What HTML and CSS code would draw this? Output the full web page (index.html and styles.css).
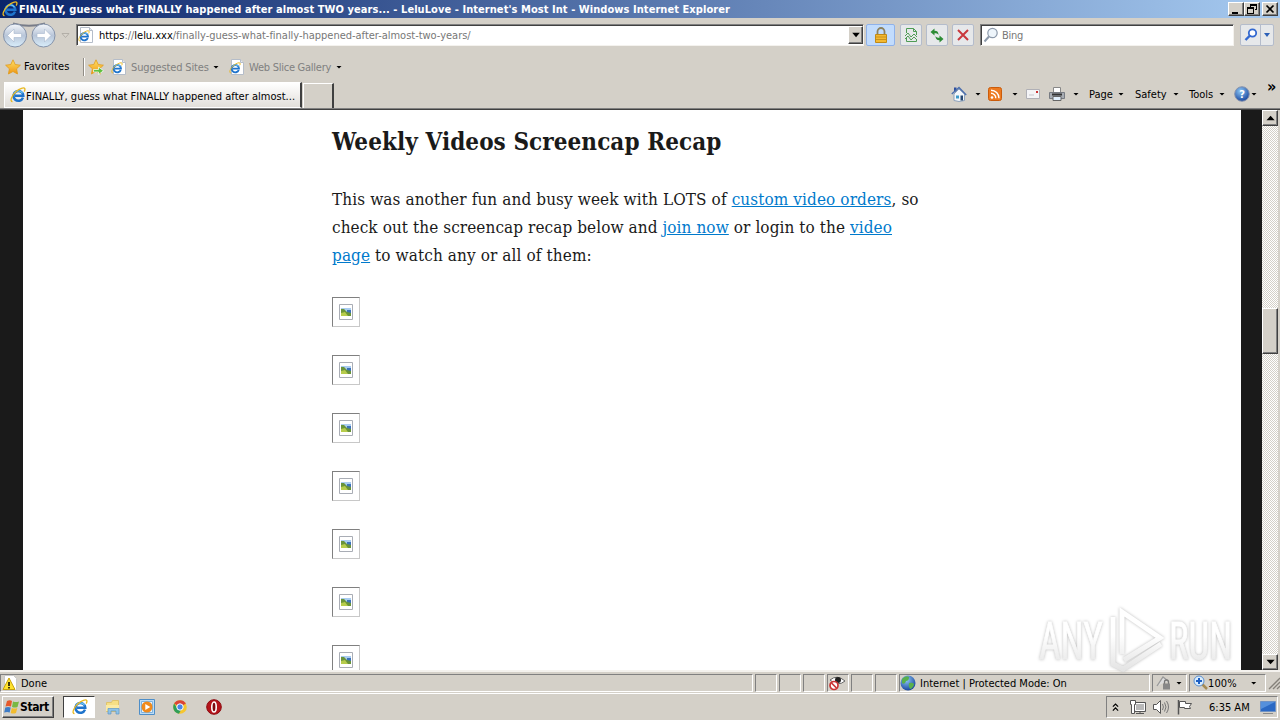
FILE: index.html
```
<!DOCTYPE html>
<html lang="en">
  <head>
    <meta charset="UTF-8" />
    <title>FINALLY, guess what FINALLY happened after almost TWO years...</title>
    <link rel="stylesheet" href="styles.css">
  </head>
  <body>
    <!-- Shared icons -->
    <svg class="defs" width="0" height="0">
      <defs>
        <linearGradient id="gold" x1="0" y1="0" x2="0" y2="1">
          <stop offset="0" stop-color="#ffe268" />
          <stop offset="1" stop-color="#ee9412" />
        </linearGradient>
        <linearGradient id="orb" x1="0" y1="0" x2="0" y2="1">
          <stop offset="0" stop-color="#f4f7fb" />
          <stop offset="0.5" stop-color="#b9c6d9" />
          <stop offset="1" stop-color="#d9eefb" />
        </linearGradient>
        <linearGradient id="silver" gradientUnits="userSpaceOnUse" x1="0" y1="8" x2="0" y2="66">
          <stop offset="0.4" stop-color="#fff" />
          <stop offset="1" stop-color="#e4e4e4" />
        </linearGradient>
        <radialGradient id="blueball" cx="0.4" cy="0.3" r="0.7">
          <stop offset="0" stop-color="#8fc8f5" />
          <stop offset="1" stop-color="#1a48a0" />
        </radialGradient>
        <symbol id="ie" viewBox="0 0 16 16">
          <path d="M13 10.600A4.900 4.900 0 1 1 13.300 8.800H5" fill="none" stroke="#1f74cc" stroke-width="2.500" />
          <path d="M12.600 6.200A4.900 4.900 0 0 0 4.200 6.400" fill="none" stroke="#6ccaf8" stroke-width="1.200" />
          <path d="M2.500 14.700C-.6 14.300 1.700 8.500 6.200 4.600 9.600 1.600 14 .1 14.800 1.600c.4.800 0 1.900-.6 3" fill="none" stroke="#e8b923" stroke-width="1.300" />
        </symbol>
        <symbol id="iepage" viewBox="0 0 16 16">
          <path d="M2.500.5h9l3 3v12h-12z" fill="#fff" stroke="#b5bdc9" />
          <path d="M11.500.5v3h3" fill="#e3e8ee" stroke="#b5bdc9" />
          <use href="#ie" x="0" y="3" width="12" height="12" />
        </symbol>
        <symbol id="star" viewBox="0 0 16 16">
          <path d="M8 .8l2.200 4.700 5.200.7-3.800 3.600.9 5.200L8 12.500 3.400 15l1-5.200L.6 6.200l5.200-.7z" fill="url(#gold)" stroke="#e09a1c" stroke-width=".8" />
        </symbol>
      </defs>
    </svg>

    <!-- Title bar -->
    <div class="titlebar">
      <svg class="icon" viewBox="0 0 16 16"><use href="#ie" /></svg>
      <span class="title">FINALLY, guess what FINALLY happened after almost TWO years... - LeluLove - Internet's Most Int - Windows Internet Explorer</span>
      <div class="window-buttons">
        <svg class="raised" viewBox="0 0 14 12"><path d="M3 9h6v2H3z" /></svg>
        <svg class="raised" viewBox="0 0 14 12"><path d="M5 1h7v6h-2v-1h1V3H6v1H5zM2 4h7v7H2zm1 2v4h5V6z" fill-rule="evenodd" /></svg>
        <svg class="raised close" viewBox="0 0 14 12"><path d="M3.500 2.500l7 7m0-7l-7 7" stroke="#000" stroke-width="1.700" /></svg>
      </div>
    </div>

    <!-- Address bar -->
    <div class="navbar">
      <svg class="arrows" viewBox="0 0 72 32">
        <path d="M13 4.500Q29 9 45 4.500" stroke="#777c88" stroke-width="2" fill="none" />
        <circle cx="15" cy="16.500" r="11.500" fill="url(#orb)" stroke="#8492a9" />
        <circle cx="43.500" cy="16.500" r="11.500" fill="url(#orb)" stroke="#8492a9" />
        <path d="M7.500 16.500l6.500-6.500v4.500h7.500v4h-7.500V23zM51 16.500L44.500 10v4.500H37v4h7.500V23z" fill="#fff" stroke="#a8b8ce" stroke-width=".6" />
        <path d="M62 14.500h7l-3.500 4z" fill="#d8d4cc" stroke="#aaa69f" stroke-width=".8" />
      </svg>
      <div class="field address">
        <svg class="icon" viewBox="0 0 16 16"><use href="#iepage" /></svg>
        <span class="url"><b>https</b>://<b>lelu.xxx</b>/finally-guess-what-finally-happened-after-almost-two-years/</span>
        <svg class="raised drop" viewBox="0 0 12 14"><path d="M3 5h7l-3.500 4z" /></svg>
      </div>
      <div class="tool lock">
        <svg class="icon" viewBox="0 0 16 16"><path d="M4.500 8V4.500a3.500 3.500 0 0 1 7 0V8" fill="none" stroke="#8c8260" stroke-width="1.800" /><path d="M2.500 7.500h11v8h-11z" fill="#f3b932" stroke="#c08a18" /><path d="M3 10h10M3 12.500h10" stroke="#c9921c" /></svg>
      </div>
      <div class="tool">
        <svg class="icon" viewBox="0 0 16 16"><path d="M3.500 6V1.500h7l3 3V8M3.500 11v3.500h10V12M10.500 1.500v3h3M2 9l3-3 3 4 3-3 3 3M2 12l3-3 3 4 3-3 3 3" fill="none" stroke="#4f9c55" /></svg>
      </div>
      <div class="tool">
        <svg class="icon" viewBox="0 0 16 16"><path d="M4.500 1L1 5h2.300c0 3 1.500 4 4.200 4C6 8 5.800 7 5.800 5H8zM11.500 14L15 10h-2.300c0-3-1.500-4-4.200-4 1.500 1 1.700 2 1.700 4H8z" transform="matrix(0 1 1 0 .5 .5)" fill="#2d8c35" /></svg>
      </div>
      <div class="tool">
        <svg class="icon" viewBox="0 0 16 16"><path d="M3 3l10 10M13 3L3 13" stroke="#c9383d" stroke-width="2" /></svg>
      </div>
      <div class="field search">
        <svg class="icon" viewBox="0 0 16 16"><circle cx="9.500" cy="6" r="4.700" fill="#eef5fb" stroke="#8d9aab" stroke-width="1.200" /><path d="M6 9.500L1.500 14.500" stroke="#8d9aab" stroke-width="2" /></svg>
        <span>Bing</span>
      </div>
      <div class="tool search-go">
        <svg class="icon" viewBox="0 0 16 16"><circle cx="9.500" cy="6" r="3.700" fill="#fff" stroke="#3268d0" stroke-width="1.800" /><path d="M7 8.500L2.500 13" stroke="#3268d0" stroke-width="2.400" /></svg>
        <svg class="split" viewBox="0 0 12 20"><path d="M3 8h6l-3 4z" fill="#2c60b8" /></svg>
      </div>
    </div>

    <!-- Favorites bar -->
    <div class="favbar">
      <svg class="icon" viewBox="0 0 16 16"><use href="#star" /></svg>
      <span class="fav-label">Favorites</span>
      <i class="sep"></i>
      <svg class="icon" viewBox="0 0 16 16"><use href="#star" /><path d="M5.500 10.500h5V8l5 3.800-5 3.700v-2.500h-5z" fill="#5fc040" stroke="#fff" stroke-width=".7" /></svg>
      <svg class="icon fav-page" viewBox="0 0 16 16"><use href="#iepage" /></svg>
      <span class="fav-link sites">Suggested Sites</span>
      <i class="caret"></i>
      <svg class="icon fav-page2" viewBox="0 0 16 16"><use href="#iepage" /></svg>
      <span class="fav-link gallery">Web Slice Gallery</span>
      <i class="caret"></i>
    </div>

    <!-- Tabs and command bar -->
    <div class="tabbar">
      <div class="tab">
        <svg class="icon" viewBox="0 0 16 16"><use href="#ie" /></svg>
        <span>FINALLY, guess what FINALLY happened after almost...</span>
      </div>
      <div class="new-tab"></div>
      <div class="commands">
        <svg class="icon" viewBox="0 0 16 16"><path d="M3 1.500h2.500v4H3z" fill="#2e4f9e" /><path d="M3 8v6.500l5 1 5.500-1V8L8 3z" fill="#f3f7fb" stroke="#8fa3bc" /><path d="M.8 8L8 1.500 15.200 9" fill="none" stroke="#4c6fae" stroke-width="1.500" /><path d="M5 9.500h3v3H5z" fill="#3d9ac8" /><path d="M9.500 9.500H12v5H9.500z" fill="#274873" /></svg>
        <i class="caret c1"></i>
        <svg class="icon" viewBox="0 0 16 16"><rect x="1.500" y="1.500" width="13" height="13" rx="2" fill="#ed7a20" stroke="#cb5c0b" /><circle cx="5" cy="11.500" r="1.300" fill="#fff" /><path d="M4 7.300a4.800 4.800 0 0 1 4.800 4.900M4 4.200a8 8 0 0 1 8 8" fill="none" stroke="#fff" stroke-width="1.400" /></svg>
        <i class="caret c2"></i>
        <svg class="icon" viewBox="0 0 16 16"><path d="M1.500 3.500h13v9h-13z" fill="#f4f4f6" stroke="#b0b0b6" /><path d="M11 5h2v2h-2z" fill="#c33" /><path d="M4 9h5" stroke="#c5c5cc" /></svg>
        <svg class="icon printer" viewBox="0 0 16 16"><path d="M4.500 1.500h7v5h-7z" fill="#fff" stroke="#888" /><path d="M.5 6.500h15v6H.5z" fill="#a7acb3" stroke="#777b82" /><path d="M4 10.500h8v4H4z" fill="#e2f0fd" stroke="#666" /><path d="M3 8.500h10" stroke="#333" stroke-width="2" /></svg>
        <i class="caret c3"></i>
        <span class="page-menu">Page</span><i class="caret"></i>
        <span class="safety">Safety</span><i class="caret"></i>
        <span class="tools">Tools</span><i class="caret"></i>
        <svg class="icon help" viewBox="0 0 16 16"><circle cx="8" cy="8" r="7.300" fill="url(#blueball)" stroke="#8793ad" /><text x="8" y="12" class="glyph">?</text></svg>
        <i class="caret"></i>
        <span class="more">»</span>
      </div>
    </div>

    <!-- Page -->
    <div class="viewport">
      <div class="page">
        <h2>Weekly Videos Screencap Recap</h2>
        <p>
          <span class="line l1">This was another fun and busy week with LOTS of <a>custom video orders</a>, so</span>
          <span class="line l2">check out the screencap recap below and <a>join now</a> or login to the <a>video</a></span>
          <span class="line l3"><a>page</a> to watch any or all of them:</span>
        </p>
        <div class="pictures"></div>
      </div>
      <div class="scrollbar">
        <svg class="raised" viewBox="0 0 12 12"><path d="M3 8h7L6.500 4z" /></svg>
        <div class="thumb"></div>
        <svg class="raised" viewBox="0 0 12 12"><path d="M3 4h7L6.500 8z" /></svg>
      </div>
      <svg class="watermark" viewBox="0 0 206 70">
        <g class="mark">
          <text x="7" y="55" textLength="64" lengthAdjust="spacingAndGlyphs">ANY</text>
          <text x="137" y="55" textLength="63" lengthAdjust="spacingAndGlyphs">RUN</text>
          <path d="M81 13v47l10 5 38-25M90 50V8l38 26-36 22" />
        </g>
      </svg>
    </div>

    <!-- Status bar -->
    <div class="statusbar">
      <div class="pane done">
        <svg class="icon" viewBox="0 0 16 16"><path d="M2.500.5h9l3 3v12h-12z" fill="#fff" stroke="#c9c9c9" /><path d="M7 3l6 11.500H1z" fill="#ffe32e" stroke="#c9a20a" /><path d="M7 7v4M7 12v1.500" stroke="#000" stroke-width="1.500" /></svg>
        <span>Done</span>
      </div>
      <div class="pane"></div>
      <div class="pane"></div>
      <div class="pane"></div>
      <div class="pane">
        <svg class="eye" viewBox="0 0 18 16"><path d="M2 5q7-6 15 1-7 6-15-1z" fill="#fff" stroke="#666" /><circle cx="10" cy="5" r="3" fill="#222" /><circle cx="6" cy="10.500" r="4" fill="#fff" stroke="#cc3434" stroke-width="1.700" /><path d="M3.500 8l5 5" stroke="#cc3434" stroke-width="1.700" /></svg>
      </div>
      <div class="pane"></div>
      <div class="pane"></div>
      <div class="pane zone">
        <svg class="icon" viewBox="0 0 16 16"><circle cx="8" cy="8" r="7.500" fill="url(#blueball)" /><path d="M2 4q4-4 7-2 0 4-3 4-1 4-4 2zM9 8q5-1 5 2-2 4-4 4-2-3-1-6z" fill="#58b04c" /></svg>
        <span>Internet | Protected Mode: On</span>
      </div>
      <div class="pane protect">
        <svg class="icon" viewBox="0 0 16 16"><path d="M1 11l6-9 5 4" fill="#ddd" stroke="#999" stroke-width="1.300" /><path d="M8.500 9V7a2 2 0 0 1 4 0v2" fill="none" stroke="#777" stroke-width="1.300" /><path d="M7 8.500h7v6H7z" fill="#888" /></svg>
        <i class="caret"></i>
      </div>
      <div class="pane zoom">
        <svg class="icon" viewBox="0 0 16 16"><path d="M9 9l5 5" stroke="#a58b55" stroke-width="2.500" /><circle cx="6" cy="6" r="5" fill="#d9ecfc" stroke="#5a8fd0" /><path d="M6 3v6M3 6h6" stroke="#1d5fc4" stroke-width="2" /></svg>
        <span>100%</span>
        <i class="caret"></i>
      </div>
      <svg class="grip" viewBox="0 0 12 14"><path d="M1 14L12 3M5 14l7-7M9 14l3-3" stroke="#85817a" stroke-width="1.300" /></svg>
    </div>

    <!-- Taskbar -->
    <div class="taskbar">
      <div class="start raised">
        <svg class="icon" viewBox="0 0 16 16"><path d="M3 2q3-1.500 5 0L7 7.500q-3-1-5.500 0z" fill="#e6592b" /><path d="M9 2.500q3 1 6 0L13.500 8Q11 9 8 8z" fill="#79b843" /><path d="M1.300 8.500q3-1 5.400 0l-1 5q-2.500-1-5.500 0z" fill="#3e7cc6" /><path d="M7.800 9q3 1.200 5.500 0L12 14q-3 1-5.300 0z" fill="#f2bc2e" /></svg>
        <b>Start</b>
      </div>
      <div class="task active"><svg class="icon" viewBox="0 0 16 16"><use href="#ie" /></svg></div>
      <svg class="icon t1" viewBox="0 0 16 16"><path d="M1.500 3.500h5l1-2h6v11h-12z" fill="#f6df85" stroke="#dfc36c" /><path d="M1 6h13v6H1z" fill="#fbeaa3" /><path d="M3 15V9.500h11V15h-3v-3H6v3z" fill="#8fc3e8" stroke="#5d96c4" stroke-width=".7" /></svg>
      <svg class="icon t2" viewBox="0 0 16 16"><path d="M.5.5h15v15H.5z" fill="#bcdcf6" stroke="#4e8ec8" /><path d="M2.500 2.500h11v11h-11z" fill="#e9f4fd" stroke="#7db2de" /><circle cx="8" cy="8" r="5.500" fill="#f08a1c" /><path d="M6.300 5v6l5-3z" fill="#fff" /></svg>
      <svg class="icon t3" viewBox="0 0 16 16"><circle cx="8" cy="8" r="6.800" fill="#f6c62f" /><path d="M8 8L2.100 4.600A6.800 6.800 0 0 1 13.900 4.600z" fill="#db4437" /><path d="M2.100 4.600A6.800 6.800 0 0 0 7 14.700L10 9 5.500 9.500z" fill="#2f9e58" /><circle cx="8" cy="8" r="3.200" fill="#4a86e8" stroke="#fff" /></svg>
      <svg class="icon t4" viewBox="0 0 16 16"><circle cx="8" cy="8" r="7.300" fill="#b5141a" stroke="#8d0a10" /><ellipse cx="8" cy="8" rx="2.200" ry="5" fill="#7d0a0e" stroke="#fff" stroke-width="1.600" /></svg>
      <div class="tray">
        <svg class="chev" viewBox="0 0 8 12"><path d="M1 5l3-3 3 3M1 9.500l3-3 3 3" fill="none" stroke="#000" stroke-width="1.400" /></svg>
        <svg class="icon y1" viewBox="0 0 16 16"><path d="M4.500 3.500h11v9h-11z" fill="#b9b9b9" stroke="#555" /><path d="M5.500 4.500h9v7h-9z" fill="none" stroke="#fff" /><path d="M6 14.500h8M10 12v2" stroke="#555" /><path d="M.5 1.500h5v4h-1v9h-3v-9h-1z" fill="#fff" stroke="#555" /></svg>
        <svg class="icon y2" viewBox="0 0 16 16"><path d="M.5 5.500h3l4-4v13l-4-4h-3z" fill="#fff" stroke="#555" /><path d="M9.500 5q1.800 3 0 6M11.500 3.500q3 4.500 0 9M13.500 2q4 6 0 12" fill="none" stroke="#777" /></svg>
        <svg class="icon y3" viewBox="0 0 16 16"><path d="M1.500 1v14.500" stroke="#555" stroke-width="1.500" /><path d="M2.500 2.500h6v2h6l-2 3 1 2h-6v-1h-5z" fill="#fff" stroke="#555" /></svg>
        <span class="clock">6:35 AM</span>
        <svg class="icon y4" viewBox="0 0 16 16"><path d="M.5 2.500h15v10H.5z" fill="#2b69c4" stroke="#6f92c4" /><path d="M1 3h14L1 10z" fill="#5590dc" /><path d="M3 14.500h10" stroke="#8a8a8a" /></svg>
      </div>
    </div>

    <script>
      // Placeholder boxes for the screencaps that did not load
      const pictures = document.querySelector(".pictures");
      for (let i = 0; i < 7; i++) {
        const box = document.createElement("div");
        box.className = "missing";
        box.innerHTML =
          '<svg viewBox="0 0 14 16"><path d="M.5.5h13v15H.5z" fill="#fff" stroke="#a9adb5"/>' +
          '<path d="M2 4h10v8H2z" fill="#a9cdf0"/><path d="M2 5h3l3 3 4 0v4H2z" fill="#69933a"/>' +
          '<path d="M8 6h4v3L8 8z" fill="#3c72ba"/><path d="M2 9l4-1 3 4H2z" fill="#b7cc4c"/></svg>';
        pictures.appendChild(box);
      }
    </script>
  </body>
</html>
```
FILE: styles.css
```
* {
  box-sizing: border-box;
}

body {
  margin: 0;
  width: 1280px;
  height: 720px;
  overflow: hidden;
  display: flex;
  flex-direction: column;
  background-color: #d4d0c8;
  font-family: "DejaVu Sans Condensed", "DejaVu Sans", sans-serif;
  font-stretch: condensed;
  font-size: 11px;
  color: #000;
  white-space: nowrap;
}

svg,
i,
span {
  display: block;
  flex: none;
}

.defs {
  position: absolute;
}

.icon {
  width: 16px;
  height: 16px;
}

.raised {
  background-color: #d4d0c8;
  border: 1px solid;
  border-color: #fff #404040 #404040 #fff;
  box-shadow: inset -1px -1px #808080;
}

.caret {
  width: 6px;
  height: 3px;
  background-color: #000;
  clip-path: polygon(0 0, 100% 0, 50% 100%);
}

/* Title bar */
.titlebar {
  height: 18px;
  display: flex;
  align-items: center;
  padding-left: 2px;
  background: linear-gradient(to right, #0a246a, #a6caf0);
  color: #fff;
  font-weight: bold;
}

.title {
  margin-left: 1px;
  width: 712px;
  letter-spacing: 0.06px;
}

.window-buttons {
  display: flex;
  margin-left: 497px;
}

.window-buttons .raised {
  width: 16px;
  height: 14px;
}

.window-buttons .close {
  margin-left: 2px;
}

/* Address bar */
.navbar {
  height: 36px;
  padding-bottom: 2px;
  display: flex;
  align-items: center;
}

.arrows {
  width: 72px;
  height: 32px;
  margin-right: 4px;
}

.field {
  height: 22px;
  background-color: #fff;
  border: 1px solid;
  border-color: #808080 #f4f2ee #f4f2ee #808080;
  box-shadow: inset 1px 1px #404040;
  display: flex;
  align-items: center;
}

.address {
  width: 788px;
  padding-left: 1px;
}

.url {
  margin-left: 5px;
  flex: 1;
  padding-top: 1px;
  letter-spacing: -0.02px;
  color: #777;
}

.url b {
  font-weight: normal;
  color: #000;
}

.drop {
  width: 15px;
  height: 18px;
}

.tool {
  width: 22px;
  height: 22px;
  margin-left: 4px;
  border: 1px solid #b4bccb;
  border-radius: 2px;
  background-color: #e6e8ea;
  display: flex;
  align-items: center;
  justify-content: center;
}

.tool.lock {
  width: 29px;
  margin: 0 1px 0 2px;
  background-color: #c2dcfd;
  border-color: #8fb2ea;
}

.search {
  width: 254px;
  margin-left: 6px;
  padding-left: 2px;
  color: #777;
}

.search span {
  margin-left: 3px;
  padding-top: 1px;
  letter-spacing: -0.3px;
}

.search-go {
  width: 34px;
  margin-left: 6px;
  justify-content: space-between;
  padding-left: 2px;
}

.split {
  width: 13px;
  height: 20px;
  border-left: 1px solid #b4bccb;
}

/* Favorites bar */
.favbar {
  height: 26px;
  display: flex;
  align-items: center;
  padding-left: 5px;
}

.fav-label {
  margin-left: 3px;
  width: 59px;
  padding-bottom: 1px;
  letter-spacing: 0.1px;
}

.sep {
  width: 2px;
  height: 18px;
  margin-right: 3px;
  border-left: 1px solid #908c85;
  border-right: 1px solid #fff;
}

.fav-page {
  margin: 0 4px 0 7px;
}

.fav-page2 {
  margin: 0 4px 0 10px;
}

.fav-link {
  color: #808080;
}

.sites {
  width: 82px;
  letter-spacing: -0.15px;
}

.gallery {
  width: 87px;
  letter-spacing: -0.25px;
}

/* Tabs */
.tabbar {
  height: 29px;
  display: flex;
  align-items: flex-end;
  border-bottom: 1px solid #808080;
  padding-left: 4px;
}

.tab {
  width: 298px;
  height: 26px;
  padding-left: 5px;
  display: flex;
  align-items: center;
  background: linear-gradient(#fff, #e2dfda);
  border: 1px solid #fff;
  border-right: 2px solid #404040;
}

.tab span {
  padding-top: 2px;
  letter-spacing: 0.02px;
}

.new-tab {
  width: 31px;
  height: 25px;
  margin-left: 1px;
  border: 1px solid #fff;
  border-right: 2px solid #404040;
  border-bottom: 0;
}

.commands {
  width: 946px;
  height: 28px;
  padding: 0 3px 0 617px;
  display: flex;
  align-items: center;
}

.c1 {
  margin: 0 6px 0 8px;
}

.c2 {
  margin: 0 7px 0 9px;
}

.printer {
  margin-left: 8px;
}

.c3 {
  margin: 0 10px 0 8px;
}

.page-menu {
  width: 29px;
}

.safety {
  width: 38px;
  margin-left: 11px;
}

.tools {
  width: 30px;
  margin-left: 10px;
}

.help {
  margin: 0 1px 0 9px;
}

.glyph {
  fill: #fff;
  font-size: 11px;
  font-weight: bold;
  text-anchor: middle;
}

.more {
  margin-left: 10px;
  font-size: 16px;
  font-weight: bold;
  line-height: 12px;
  padding-bottom: 14px;
}

/* Page */
.viewport {
  height: 561px;
  position: relative;
  display: flex;
  background-color: #1a1a1a;
  border-top: 1px solid #404040;
  padding-left: 23px;
}

.page {
  width: 1218px;
  padding-left: 309px;
  overflow: hidden;
  background-color: #fff;
  color: #1a1a1a;
  font-family: "DejaVu Serif Condensed", "DejaVu Serif", serif;
}

.page h2 {
  margin: 18px 0 29px;
  font-size: 24px;
  line-height: 28px;
  letter-spacing: 0.07px;
}

.page p {
  margin: 0 0 28px;
  font-size: 17px;
  line-height: 28px;
  letter-spacing: 0.1px;
}

.l2 {
  letter-spacing: 0.08px;
}

.page a {
  color: #007acc;
  text-decoration: underline;
}

.pictures {
  display: flex;
  flex-direction: column;
  gap: 28px;
}

.missing {
  width: 28px;
  height: 30px;
  padding: 6px;
  border: 1px solid;
  border-color: #808080 #c8c8c8 #c8c8c8 #808080;
}

.missing svg {
  width: 14px;
  height: 16px;
}

.scrollbar {
  width: 18px;
  margin-left: 21px;
  border-right: 2px solid #d4d0c8;
  background: repeating-conic-gradient(#fff 0 25%, #d4d0c8 0 50%) 0 0 / 2px 2px;
}

.scrollbar .raised {
  width: 16px;
  height: 16px;
}

.thumb {
  height: 46px;
  margin: 182px 0 300px;
  background-color: #d4d0c8;
  border: 1px solid;
  border-color: #fff #404040 #404040 #fff;
  box-shadow: inset -1px -1px #808080;
}

.watermark {
  position: absolute;
  left: 1032px;
  top: 494px;
  width: 206px;
  height: 70px;
  filter: drop-shadow(0 0 1.5px #bbb);
}

.mark {
  fill: url(#silver);
  stroke: url(#silver);
  stroke-width: 0.8;
  font-family: Roboto, sans-serif;
  font-size: 51px;
}

.mark path {
  fill: none;
  stroke-width: 5;
}

/* Status bar */
.statusbar {
  height: 24px;
  padding-top: 2px;
  border-top: 2px solid #f4f2ee;
  display: flex;
  gap: 2px;
  margin-bottom: -1px;
}

.pane {
  width: 22px;
  height: 18px;
  border: 1px solid;
  border-color: #808080 #fff #fff #808080;
  display: flex;
  align-items: center;
}

.pane.done {
  width: 753px;
  padding-left: 1px;
}

.done span {
  margin-left: 3px;
}

.eye {
  width: 18px;
  height: 16px;
}

.zone {
  width: 251px;
}

.zone span {
  margin-left: 4px;
}

.protect {
  width: 35px;
  padding-left: 3px;
}

.protect .caret {
  margin-left: 4px;
}

.pane.zoom {
  width: 77px;
  padding-left: 3px;
}

.pane.zoom span {
  margin-left: -1px;
  letter-spacing: 0.1px;
}

.zoom .caret {
  margin-left: 14px;
}

.grip {
  width: 12px;
  height: 16px;
}

/* Taskbar */
.taskbar {
  height: 27px;
  border-top: 1px solid #fff;
  padding: 2px 0 0 2px;
  display: flex;
  align-items: flex-start;
}

.start {
  width: 52px;
  height: 22px;
  display: flex;
  align-items: center;
  padding-left: 1px;
}

.start b {
  font-size: 12px;
  letter-spacing: -0.4px;
}

.task {
  width: 32px;
  height: 22px;
  margin-left: 9px;
  padding-left: 8px;
  display: flex;
  align-items: center;
  background-color: #fff;
  border: 1px solid;
  border-color: #404040 #fff #fff #404040;
}

.t1,
.t2,
.t3,
.t4 {
  margin-top: 3px;
}

.t1 {
  margin-left: 10px;
}

.t2 {
  margin-left: 18px;
}

.t3 {
  margin-left: 17px;
}

.t4 {
  margin-left: 18px;
}

.tray {
  width: 172px;
  height: 22px;
  margin-left: 884px;
  padding-left: 5px;
  display: flex;
  align-items: center;
  border: 1px solid;
  border-color: #808080 #fff #fff #808080;
}

.chev {
  width: 7px;
  height: 11px;
}

.y1 {
  margin-left: 11px;
}

.y2 {
  margin-left: 7px;
}

.y3 {
  margin-left: 8px;
}

.clock {
  width: 43px;
  margin-left: 16px;
}

.y4 {
  margin-left: 8px;
}
```
